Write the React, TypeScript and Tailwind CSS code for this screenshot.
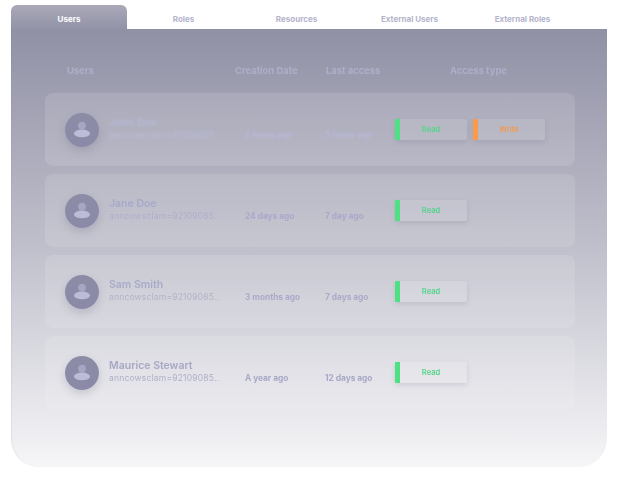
const users = [
  { name: 'John Doe', created: '2 hours ago', last: '5 hours ago', fade: 'blur-[0.8px] text-[#b8b8d8]', sub: 'text-[#bcbcd8]', write: true },
  { name: 'Jane Doe', created: '24 days ago', last: '7 day ago', fade: 'blur-[0.5px] text-[#a8a8ca]', sub: 'text-[#aeaecc]', write: false },
  { name: 'Sam Smith', created: '3 months ago', last: '7 days ago', fade: 'blur-[0.3px] text-[#aaaaca]', sub: 'text-[#b2b2ca]', write: false },
  { name: 'Maurice Stewart', created: 'A year ago', last: '12 days ago', fade: 'blur-[0.2px] text-[#a8a8c6]', sub: 'text-[#b0b0c8]', write: false },
];

const tabs = ['Roles', 'Resources', 'External Users', 'External Roles'];

const Avatar = () => (
  <div className="flex h-[34px] w-[34px] shrink-0 items-center justify-center rounded-full bg-gradient-to-b from-[#8c8ca6] to-[#8a8aa8] shadow-[0_4px_8px_rgba(90,90,120,0.22)]">
    <svg width="18" height="17" viewBox="0 0 18 17" fill="#bcbcd8">
      <circle cx="9" cy="4.6" r="3.9" fill="#a6a6c4" />
      <ellipse cx="9" cy="12.4" rx="8" ry="3.9" />
    </svg>
  </div>
);

const Badge = ({ label, bar, text }: { label: string; bar: string; text: string }) => (
  <div className="flex h-[21px] w-[72px] rounded-[2px] bg-white/10 shadow-[0_2px_5px_rgba(90,90,120,0.16)]">
    <div className={`h-full w-[5px] rounded-l-[1px] ${bar}`} />
    <span className={`flex-1 pr-[5px] text-center text-[7.5px] font-semibold leading-[21px] blur-[0.3px] ${text}`}>{label}</span>
  </div>
);

export default function App() {
  return (
    <div className="h-[482px] w-[622px] bg-white pl-[11px] pt-[5px] font-['Inter',sans-serif]">
      <div className="flex h-[24px] w-[596px]">
        <div className="w-[116px] rounded-t-[6px] bg-gradient-to-b from-[#a9a9b8] to-[#9393a8] text-center text-[8px] font-bold leading-[28px] text-white">
          Users
        </div>
        {tabs.map((t) => (
          <div key={t} className="w-[113px] text-center text-[8px] font-bold leading-[28px] text-[#b4b4cc]">
            {t}
          </div>
        ))}
      </div>

      <div className="h-[438px] w-[596px] rounded-b-[28px] bg-gradient-to-b from-[#9191a6] via-[#c0c0cc] to-[#f6f6f8] pl-[34px] pr-[32px] shadow-[inset_1px_0_0_rgba(120,120,140,0.1)]">
        <div className="grid h-[64px] grid-cols-[168px_91px_124px_1fr] items-center pl-[22px] pt-[20px] text-[9.4px] font-bold text-[#aeaeca] blur-[0.3px]">
          <span>Users</span>
          <span>Creation Date</span>
          <span>Last access</span>
          <span>Access type</span>
        </div>

        <div className="flex flex-col gap-[8px]">
          {users.map((u) => (
            <div key={u.name} className="flex h-[73px] items-center rounded-[8px] bg-white/[0.12] pl-[20px]">
              <Avatar />
              <div className={`-mt-[2px] ml-[10px] w-[136px] ${u.fade}`}>
                <div className="text-[10.5px] font-semibold leading-[14px]">{u.name}</div>
                <div className={`whitespace-nowrap text-[8.5px] leading-[11px] tracking-[0.2px] ${u.sub}`}>anncowsclam=92109085..</div>
              </div>
              <div className={`mt-[11px] w-[80px] text-[8.3px] font-bold ${u.fade}`}>{u.created}</div>
              <div className={`mt-[11px] w-[70px] text-[8.3px] font-bold ${u.fade}`}>{u.last}</div>
              <div className="-mt-[1px] flex gap-[6px]">
                <Badge label="Read" bar="bg-[#4fe084]" text="text-[#54d488]" />
                {u.write && <Badge label="Write" bar="bg-[#fb9a48]" text="text-[#f09a50]" />}
              </div>
            </div>
          ))}
        </div>
      </div>
    </div>
  );
}
